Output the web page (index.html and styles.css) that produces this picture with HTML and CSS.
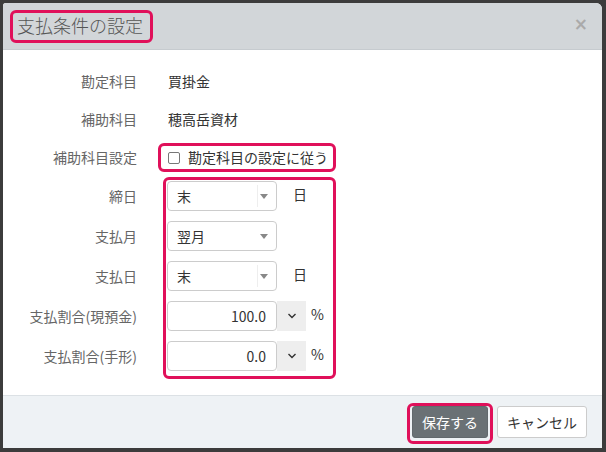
FILE: index.html
```html
<!DOCTYPE html>
<html lang="ja">
<head>
    <meta charset="UTF-8">
    <title>支払条件の設定</title>
    <link rel="stylesheet" href="styles.css">
</head>
<body>
    <div class="modal">
        <div class="modal-header">
            <h4 class="modal-title">支払条件の設定</h4>
            <span class="close">&times;</span>
        </div>
        <div class="modal-body">
            <div class="row text-row">
                <label class="row-label">勘定科目</label>
                <div class="row-value">買掛金</div>
            </div>
            <div class="row text-row">
                <label class="row-label">補助科目</label>
                <div class="row-value">穂高岳資材</div>
            </div>
            <div class="row text-row">
                <label class="row-label">補助科目設定</label>
                <div class="row-value">
                    <span class="check"></span>勘定科目の設定に従う
                </div>
            </div>
            <div class="row">
                <label class="row-label">締日</label>
                <div class="select has-sep">末<i class="arrow"></i></div>
                <span class="unit-day">日</span>
            </div>
            <div class="row">
                <label class="row-label">支払月</label>
                <div class="select">翌月<i class="arrow"></i></div>
            </div>
            <div class="row">
                <label class="row-label">支払日</label>
                <div class="select has-sep">末<i class="arrow"></i></div>
                <span class="unit-day">日</span>
            </div>
            <div class="row">
                <label class="row-label">支払割合(現預金)</label>
                <div class="num">100.0</div>
                <span class="num-btn">
                    <svg width="10" height="6" viewBox="0 0 10 6"><path d="M1.5 1 L5 4.5 L8.5 1" fill="none" stroke="#333" stroke-width="1.4"/></svg>
                </span>
                <span class="unit">%</span>
            </div>
            <div class="row">
                <label class="row-label">支払割合(手形)</label>
                <div class="num">0.0</div>
                <span class="num-btn">
                    <svg width="10" height="6" viewBox="0 0 10 6"><path d="M1.5 1 L5 4.5 L8.5 1" fill="none" stroke="#333" stroke-width="1.4"/></svg>
                </span>
                <span class="unit">%</span>
            </div>
        </div>
        <div class="modal-footer">
            <button class="btn btn-save">保存する</button>
            <button class="btn btn-cancel">キャンセル</button>
        </div>

        <!-- 注記の枠 -->
        <div class="mark mark-title"></div>
        <div class="mark mark-check"></div>
        <div class="mark mark-fields"></div>
        <div class="mark mark-save"></div>
    </div>
</body>
</html>
```

FILE: styles.css
```css
* {
    margin: 0;
    padding: 0;
    box-sizing: border-box;
}
body {
    width: 606px;
    height: 452px;
    padding: 3px 4px 4px 3px;
    background-color: #3c3c3c;
    font-family: "Noto Sans CJK JP", "Noto Sans", sans-serif;
    font-size: 14px;
    color: #333;
}
.modal {
    position: relative;
    height: 100%;
    display: flex;
    flex-direction: column;
    background-color: #fff;
    border-radius: 3px 6px 0 0;
    overflow: hidden;
}
.modal-header {
    height: 47px;
    display: flex;
    align-items: center;
    justify-content: space-between;
    padding: 0 14px 2px 14px;
    background-color: #d2d6d9;
    border-bottom: 1px solid #c6cbcf;
}
.modal-title {
    font-size: 18px;
    font-weight: 300;
    color: #555;
}
.close {
    font-family: "DejaVu Sans", sans-serif;
    font-size: 17px;
    font-weight: bold;
    color: #aaa;
    margin-top: -2px;
}
.modal-body {
    flex: 1;
    padding-top: 17px;
}
.row {
    display: flex;
    align-items: center;
    height: 30px;
    margin-bottom: 10px;
}
.text-row {
    height: 28px;
}
.row-label {
    width: 134px;
    margin-right: 30px;
    text-align: right;
    color: #666;
}
.row-value {
    display: flex;
    align-items: center;
    padding-left: 1px;
}
.check {
    width: 12px;
    height: 12px;
    border: 1px solid #777;
    border-radius: 2px;
    margin: 1px 8px 0 0;
}
.select {
    position: relative;
    width: 110px;
    height: 30px;
    line-height: 28px;
    padding-left: 9px;
    border: 1px solid #ccc;
    border-radius: 4px;
    background-color: #fff;
}
.select.has-sep::before {
    content: "";
    position: absolute;
    left: 89px;
    top: 3px;
    bottom: 3px;
    border-left: 1px solid #eee;
}
.arrow {
    position: absolute;
    right: 8px;
    top: 12px;
    border-left: 4px solid transparent;
    border-right: 4px solid transparent;
    border-top: 5px solid #888;
}
.unit-day {
    margin-left: 16px;
    margin-top: -4px;
}
.num {
    width: 110px;
    height: 30px;
    line-height: 28px;
    padding-right: 10px;
    text-align: right;
    border: 1px solid #ccc;
    border-radius: 4px;
    background-color: #fff;
}
.num-btn {
    width: 29px;
    height: 30px;
    display: flex;
    align-items: center;
    justify-content: center;
    background-color: #eee;
}
.unit {
    margin-left: 5px;
    margin-top: -4px;
}
.modal-footer {
    height: 53px;
    display: flex;
    align-items: center;
    justify-content: flex-end;
    gap: 9px;
    padding-right: 15px;
    background-color: #eef2f5;
    border-top: 1px solid #dce1e5;
}
.btn {
    height: 32px;
    font-family: inherit;
    font-size: 14px;
    border-radius: 3px;
}
.btn-save {
    width: 76px;
    color: #fff;
    background-color: #6a7175;
    border: 1px solid #62696d;
}
.btn-cancel {
    width: 90px;
    color: #333;
    background-color: #fff;
    border: 1px solid #ccc;
}
.mark {
    position: absolute;
    border: 3px solid #e0105a;
    border-radius: 6px;
}
.mark-title {
    left: 7px;
    top: 7px;
    width: 143px;
    height: 33px;
}
.mark-check {
    left: 155px;
    top: 140px;
    width: 178px;
    height: 29px;
}
.mark-fields {
    left: 160px;
    top: 174px;
    width: 173px;
    height: 202px;
}
.mark-save {
    left: 404px;
    top: 400px;
    width: 86px;
    height: 41px;
}
```
